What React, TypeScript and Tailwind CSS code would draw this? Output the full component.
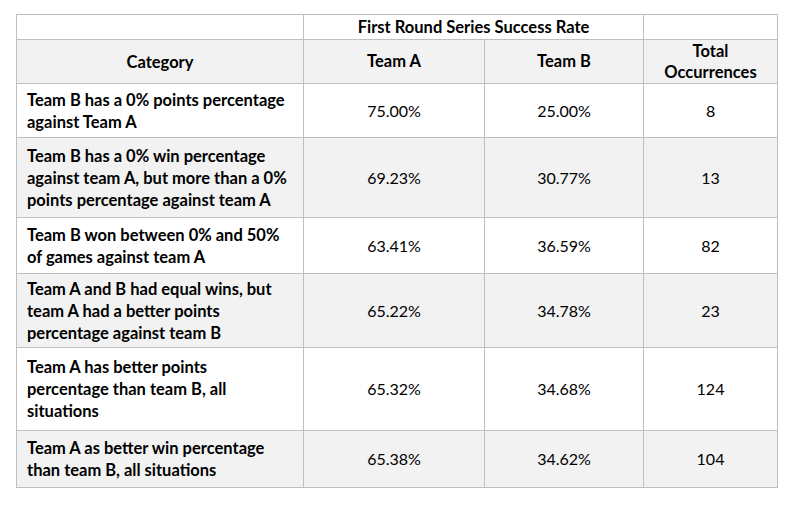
const rows = [
  {
    category: ["Team B has a 0% points percentage", "against Team A"],
    a: "75.00%",
    b: "25.00%",
    total: "8",
    h: "h-[54px]",
    shade: false,
  },
  {
    category: [
      "Team B has a 0% win percentage",
      "against team A, but more than a 0%",
      "points percentage against team A",
    ],
    a: "69.23%",
    b: "30.77%",
    total: "13",
    h: "h-[80px]",
    shade: true,
  },
  {
    category: ["Team B won between 0% and 50%", "of games against team A"],
    a: "63.41%",
    b: "36.59%",
    total: "82",
    h: "h-[56px]",
    shade: false,
  },
  {
    category: [
      "Team A and B had equal wins, but",
      "team A had a better points",
      "percentage against team B",
    ],
    a: "65.22%",
    b: "34.78%",
    total: "23",
    h: "h-[74px]",
    shade: true,
  },
  {
    category: [
      "Team A has better points",
      "percentage than team B, all",
      "situations",
    ],
    a: "65.32%",
    b: "34.68%",
    total: "124",
    h: "h-[83px]",
    shade: false,
  },
  {
    category: ["Team A as better win percentage", "than team B, all situations"],
    a: "65.38%",
    b: "34.62%",
    total: "104",
    h: "h-[57px]",
    shade: true,
  },
];

const App = () => {
  return (
    <div className="w-[798px] h-[505px] bg-white pt-[14px] pl-[16px] font-['Lato','Open_Sans',sans-serif] text-[16px] text-black">
      <table className="table-fixed border-collapse w-[761px]">
        <colgroup>
          <col className="w-[287px]" />
          <col className="w-[181px]" />
          <col className="w-[159px]" />
          <col className="w-[134px]" />
        </colgroup>
        <thead>
          {/* Title row */}
          <tr className="h-[25px]">
            <th className="border border-[#bfbfbf]"></th>
            <th colSpan={2} className="border border-[#bfbfbf] font-bold text-center align-middle leading-[20px] text-[16.5px]">
              First Round Series Success Rate
            </th>
            <th className="border border-[#bfbfbf]"></th>
          </tr>
          <tr className="h-[44px] bg-[#f2f2f2] text-[16.5px]">
            <th className="border border-[#bfbfbf] font-bold text-center pt-[2px]">Category</th>
            <th className="border border-[#bfbfbf] font-bold text-center">Team A</th>
            <th className="border border-[#bfbfbf] font-bold text-center">Team B</th>
            <th className="border border-[#bfbfbf] font-bold text-center leading-[21px]">
              Total
              <br />
              Occurrences
            </th>
          </tr>
        </thead>
        <tbody>
          {rows.map((r) => (
            <tr key={r.total} className={`${r.h} ${r.shade ? "bg-[#f2f2f2]" : "bg-white"}`}>
              <td className="border border-[#bfbfbf] font-bold text-left text-[16.5px] pl-[10px] leading-[22px] align-middle">
                {r.category.map((line, i) => (
                  <div key={i} className="whitespace-nowrap">
                    {line}
                  </div>
                ))}
              </td>
              <td className="border border-[#bfbfbf] text-center">{r.a}</td>
              <td className="border border-[#bfbfbf] text-center">{r.b}</td>
              <td className="border border-[#bfbfbf] text-center">{r.total}</td>
            </tr>
          ))}
        </tbody>
      </table>
    </div>
  );
};

export default App;
